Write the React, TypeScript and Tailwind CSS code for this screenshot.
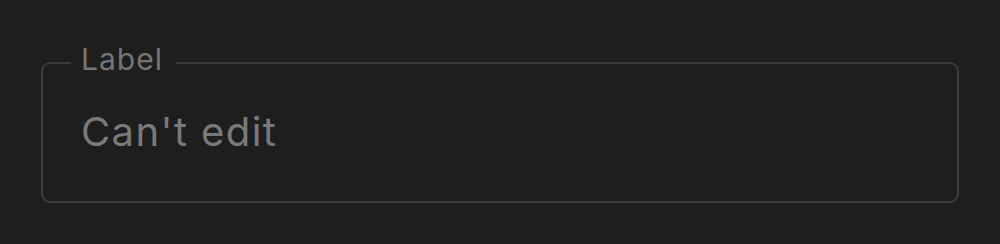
export default function App() {
  return (
    <div className="w-[1000px] h-[244px] bg-[#1e1e1e] pt-[44px] pl-[41px] pr-[41px]" style={{ fontFamily: "Inter, 'Noto Sans', sans-serif" }}>
      <fieldset className="m-0 p-0 border-2 border-[#3c3c3c] rounded-[9px] min-w-0">
        <legend className="ml-[28px] pl-[10px] pr-[13px] pb-[8px] text-[30px] leading-[30px] text-[#767676] tracking-[1px]">Label</legend>
        <div className="pl-[38px] pt-[30px] pb-[49px] text-[40px] leading-[40px] text-[#7a7a7a] tracking-[1.4px]">Can't edit</div>
      </fieldset>
    </div>
  );
}
